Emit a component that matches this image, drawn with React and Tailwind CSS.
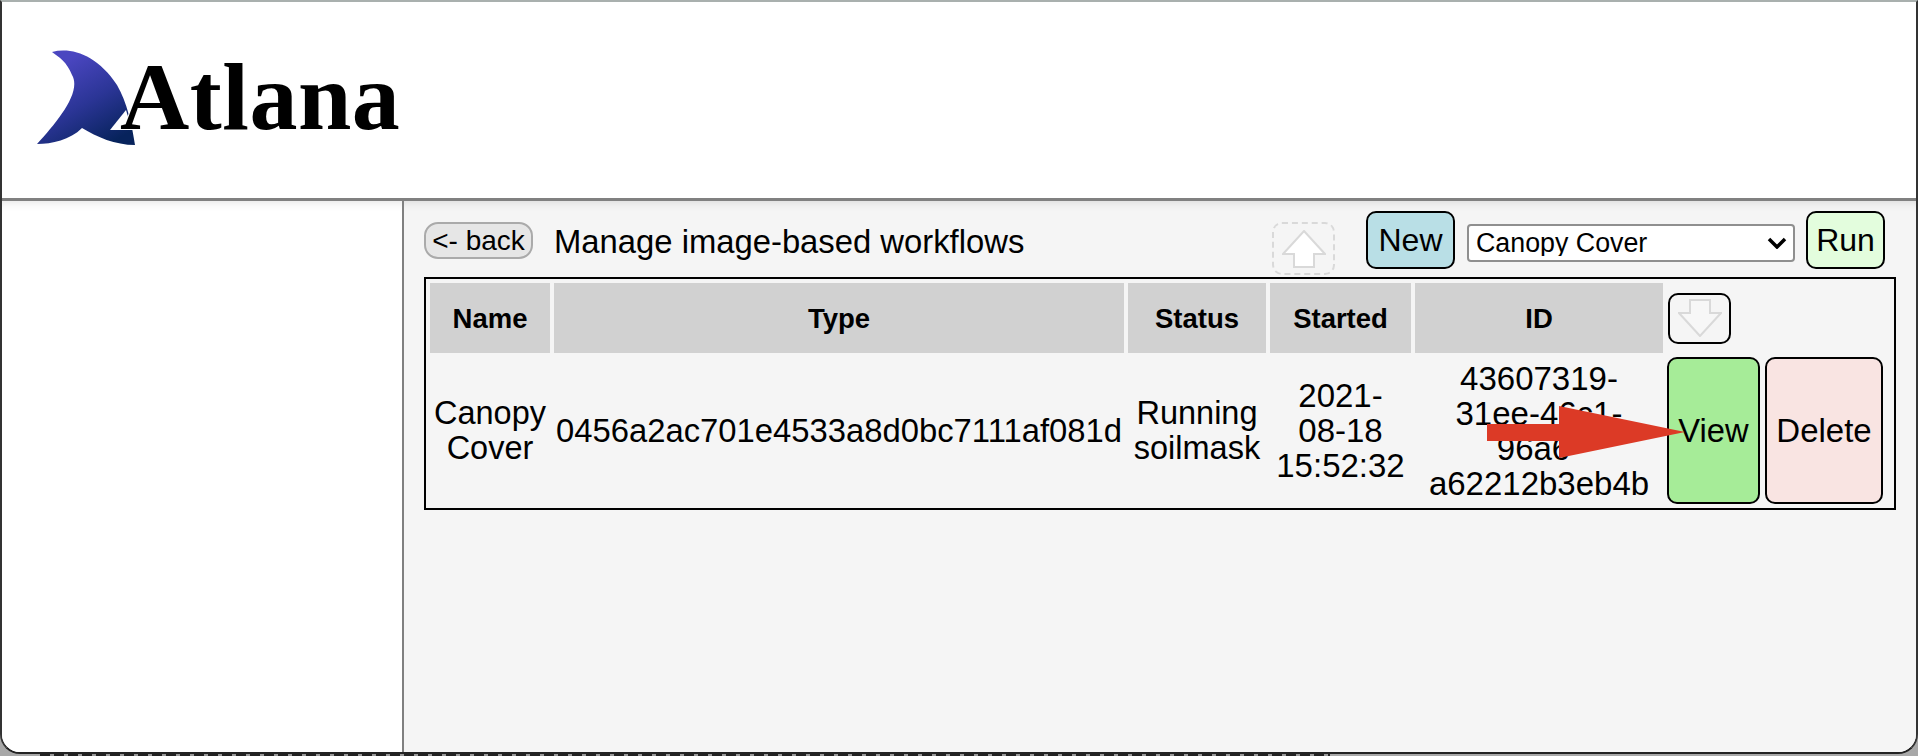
const HEADERS = ["Name", "Type", "Status", "Started", "ID"];

function ArrowBox({ up }) {
  return (
    <svg width="44" height="38" viewBox="0 0 44 38" className={up ? "" : "rotate-180"}>
      <path
        d="M22 1 L43 24 L32 24 L32 37 L12 37 L12 24 L1 24 Z"
        fill={up ? "#fff" : "#f7f7f7"}
        stroke="#d9d9d9"
        strokeWidth="2"
      />
    </svg>
  );
}

function Logo() {
  return (
    <div className="relative h-[100px] w-[370px]">
      <svg width="102" height="100" viewBox="0 0 102 100" className="absolute left-0 top-0">
        <defs>
          <linearGradient id="fin" x1="0.3" y1="0.1" x2="0.8" y2="0.95">
            <stop offset="0" stopColor="#4a46c0" />
            <stop offset="0.5" stopColor="#2b3596" />
            <stop offset="1" stopColor="#07235c" />
          </linearGradient>
        </defs>
        <path
          d="M15 2 C35 -3 60 5 80 35 C90 52 95 75 98 95 C78 95 60 87 45 78 C33 90 15 94 0 94 C20 72 45 42 35 25 C30 12 22 7 15 2 Z"
          fill="url(#fin)"
        />
        <path d="M73 80 L95 80 L89 60 Z" fill="#fff" />
      </svg>
      <span className="absolute left-[83px] top-[-8px] font-['Liberation_Serif',serif] font-bold text-[96px] leading-[110px] tracking-[0.5px] text-black [-webkit-text-stroke:2px_white] [paint-order:stroke_fill]">
        Atlana
      </span>
    </div>
  );
}

export default function App() {
  return (
    <div className="w-[1918px] h-[756px] overflow-hidden bg-[#a8a8a8] font-['Liberation_Sans',Arial,sans-serif] text-black">
      <div className="h-[754px] flex flex-col overflow-hidden rounded-b-[20px] border-x-2 border-b-2 border-t-2 border-x-[#333] border-b-[#222] border-t-[#a9b0ae] bg-white">
        <header className="h-[199px] shrink-0 pl-[35px] pt-[48px] border-b-[3px] border-[#808080]">
          <Logo />
        </header>
        <div className="flex-1 flex min-h-0">
          <aside className="w-[402px] shrink-0 bg-white border-r-2 border-[#808080] shadow-[inset_0_10px_10px_-8px_rgba(0,0,0,0.1)]" />
          <main className="flex-1 bg-[#f5f5f5] pl-5 pt-[10px] pr-5 shadow-[inset_0_10px_10px_-8px_rgba(0,0,0,0.1)]">
            <div className="flex items-start h-[66px] w-[1471px]">
              <button className="mt-[11px] w-[109px] h-[37px] rounded-[14px] border-2 border-[#aaa] bg-[#e6e6e6] text-[28px] leading-none">
                {"<- back"}
              </button>
              <span className="mt-[12px] ml-[21px] text-[32.8px] leading-[37px] w-[718px]">
                Manage image-based workflows
              </span>
              <div className="w-[63px] h-[53px] mt-[11px] flex items-center justify-center rounded-[10px] border-2 border-dashed border-[#d9d9d9]">
                <ArrowBox up />
              </div>
              <button className="ml-[31px] w-[89px] h-[58px] rounded-[10px] border-2 border-black bg-[#b9dfe6] text-[32px]">
                New
              </button>
              <div className="relative ml-[12px] mt-[13px] w-[328px] h-[38px]">
                <select className="appearance-none w-full h-full rounded-[4px] border-2 border-[#8f8f8f] bg-white pl-[7px] text-[26.8px] leading-none">
                  <option>Canopy Cover</option>
                </select>
                <svg width="20" height="12" viewBox="0 0 20 12" className="absolute right-[8px] top-[13px]">
                  <path d="M2 2 L10 10 L18 2" fill="none" stroke="#000" strokeWidth="3.5" />
                </svg>
              </div>
              <button className="ml-[11px] w-[79px] h-[58px] rounded-[10px] border-2 border-black bg-[#e3fddd] text-[32px]">
                Run
              </button>
            </div>
            <table className="w-[1472px] h-[233px] border-2 border-black border-separate border-spacing-[4px] text-center text-[32.5px] leading-[35px]">
              <thead>
                <tr>
                  {HEADERS.map((h) => (
                    <th key={h} className="h-[70px] bg-[#d1d1d1] text-[27.5px] font-bold p-0">
                      {h}
                    </th>
                  ))}
                  <th className="p-0 text-left">
                    <div className="w-[63px] h-[51px] ml-[1px] flex items-center justify-center rounded-[10px] border-2 border-black bg-[#f5f5f5]">
                      <ArrowBox />
                    </div>
                  </th>
                </tr>
              </thead>
              <tbody>
                <tr>
                  <td className="w-[120px] p-0">Canopy Cover</td>
                  <td className="w-[570px] p-0 text-[32.8px]">0456a2ac701e4533a8d0bc7111af081d</td>
                  <td className="w-[138px] p-0">Running soilmask</td>
                  <td className="w-[141px] p-0 text-[33px]">
                    2021-
                    <br />
                    08-18
                    <br />
                    15:52:32
                  </td>
                  <td className="w-[248px] p-0 text-[33px]">
                    43607319-
                    <br />
                    31ee-46c1-
                    <br />
                    96a6-
                    <br />
                    a62212b3eb4b
                  </td>
                  <td className="p-0">
                    <div className="flex gap-[5px]">
                      <button className="w-[93px] h-[147px] rounded-[10px] border-2 border-black bg-[#a6ec98] text-[32.7px]">
                        View
                      </button>
                      <button className="w-[118px] h-[147px] rounded-[10px] border-2 border-black bg-[#f9e4e2] text-[33px]">
                        Delete
                      </button>
                    </div>
                  </td>
                </tr>
              </tbody>
            </table>
          </main>
        </div>
      </div>
      <div className="ml-[40px] w-[1290px] h-[2px] bg-[repeating-linear-gradient(90deg,#222_0_10px,#999_10px_14px)]" />
      <svg width="198" height="52" viewBox="0 0 198 52" className="absolute left-[1487px] top-[406px]">
        <path d="M0 18 H72 V0 L198 26 L72 52 V35 H0 Z" fill="#dc3a26" />
      </svg>
    </div>
  );
}
